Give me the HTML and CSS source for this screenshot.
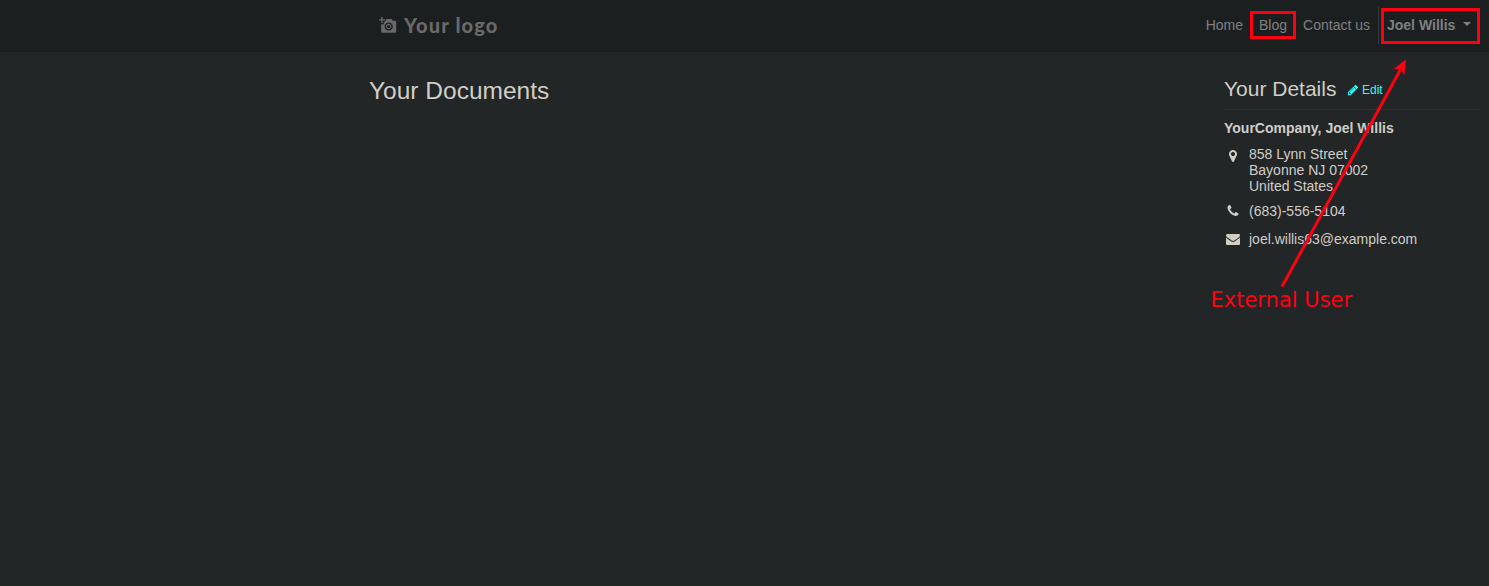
FILE: index.html
```html
<!DOCTYPE html>
<html lang="en">
<head>
<meta charset="utf-8">
<title>Your Documents</title>
<link rel="stylesheet" href="styles.css">
</head>
<body>
<header class="header">
  <a class="logo">
    <svg class="logo-icon" viewBox="0 0 18 17"><path d="M2.2 0h1.4v2.2H6v1.4H3.6V6H2.2V3.6H0V2.2h2.2z"/><path fill-rule="evenodd" d="M7.2 2h5.2l1.4 1.8H16q1.2 0 1.2 1.2v9.6q0 1.2-1.2 1.2H3.4q-1.2 0-1.2-1.2V7.2h2.6V4.8h1.2zM9.7 5.4a4.1 4.1 0 1 0 .01 0zM9.7 6.8a2.7 2.7 0 1 1-.01 0zM9.7 7.9a1.6 1.6 0 1 0 .01 0z"/></svg>
    <span class="logo-text">Your logo</span>
  </a>
  <nav class="nav">
    <a class="link home">Home</a>
    <a class="link blog">Blog</a>
    <a class="link contact">Contact us</a>
    <span class="divider"></span>
    <a class="link user">Joel Willis<span class="caret"></span></a>
  </nav>
</header>
<main class="content">
  <h1 class="title">Your Documents</h1>
  <aside class="details">
    <div class="details-head">
      <h2 class="subtitle">Your Details</h2>
      <a class="edit"><svg class="pencil" viewBox="0 0 1792 1792"><path d="M491 1536l91-91-235-235-91 91v107h128v128h107zm523-928q0-22-22-22-10 0-17 7l-542 542q-7 7-7 17 0 22 22 22 10 0 17-7l542-542q7-7 7-17zm-54-192l416 416-832 832h-416v-416zm683 96q0 53-37 90l-166 166-416-416 166-165q36-38 90-38 53 0 91 38l235 234q37 39 37 91z"/></svg>Edit</a>
    </div>
    <div class="name">YourCompany, Joel Willis</div>
    <div class="row address">
      <svg class="icon" viewBox="0 0 1792 1792"><path d="M1152 640q0-106-75-181t-181-75-181 75-75 181 75 181 181 75 181-75 75-181zm256 0q0 109-33 179l-364 774q-16 33-47.5 52t-67.5 19-67.5-19-46.5-52l-365-774q-33-70-33-179 0-212 150-362t362-150 362 150 150 362z"/></svg>
      <div>858 Lynn Street<br>Bayonne NJ 07002<br>United States</div>
    </div>
    <div class="row phone">
      <svg class="icon" viewBox="0 0 1792 1792"><path d="M1600 1240q0 27-10 70.5t-21 68.5q-21 50-122 106-94 51-186 51-27 0-53-3.5t-57.5-12.5-47-14.5-55.5-20.5-49-18q-98-35-175-83-127-79-264-216t-216-264q-48-77-83-175-3-9-18-49t-20.5-55.5-14.5-47-12.5-57.5-3.5-53q0-92 51-186 56-101 106-122 25-11 68.5-21t70.5-10q14 0 21 3 18 6 53 76 11 19 30 54t35 63.5 31 53.5q3 4 17.5 25t21.5 35.5 7 28.5q0 20-28.5 50t-62 55-62 53-28.5 46q0 9 5 22.5t8.5 20.5 14 24 11.5 19q76 137 174 235t235 174q2 1 19 11.5t24 14 20.5 8.5 22.5 5q18 0 46-28.5t53-62 55-62 50-28.5q14 0 28.5 7t35.5 21.5 25 17.5q25 15 53.5 31t63.5 35 54 30q70 35 76 53 3 7 3 21z"/></svg>
      <div>(683)-556-5104</div>
    </div>
    <div class="row mail">
      <svg class="icon" viewBox="0 0 1792 1792"><path d="M1792 710v794q0 66-47 113t-113 47h-1472q-66 0-113-47t-47-113v-794q44 49 101 87 362 246 497 345 57 42 92.5 65.5t94.5 48 110 24.5h2q51 0 110-24.5t94.5-48 92.5-65.5q170-123 498-345 57-39 100-87zm0-294q0 79-49 151t-122 123q-376 261-468 325-10 7-42.5 31t-54 38.5-52 32.5-57.5 27-50 9h-2q-23 0-50-9t-57.5-27-52-32.5-54-38.5-42.5-31q-91-64-262-182.5t-205-142.5q-62-42-117-115.5t-55-136.5q0-78 41.5-130t118.5-52h1472q65 0 112.5 47t47.5 113z"/></svg>
      <div>joel.willis63@example.com</div>
    </div>
  </aside>
</main>
<!-- Annotations drawn over the page -->
<svg class="marks" viewBox="0 0 1489 586">
  <g class="boxes"><rect x="1251.5" y="12.5" width="43" height="25"/><rect x="1382.5" y="9.5" width="96" height="33"/><path d="M1282.1 286.5L1400.5 69.5"/></g>
  <path class="arrowhead" d="M1405.9 59.5L1404.3 75.3L1400.8 68.8L1393.3 69.2z"/>
</svg>
<div class="note">External User</div>
</body>
</html>
```

FILE: styles.css
```css
* { box-sizing: border-box; }
body {
  margin: 0;
  height: 586px;
  overflow: hidden;
  background: #222627;
  color: #d1cdc7;
  font: 14px/16px "Liberation Sans", Arial, sans-serif;
}
.header {
  display: flex;
  justify-content: space-between;
  height: 52px;
  padding: 0 9px 0 379px;
  background: #1b1f20;
  color: #808080;
}
.logo { display: flex; align-items: flex-start; color: #696969; }
.logo-icon { width: 18px; height: 17px; margin-top: 17px; fill: currentColor; }
.logo-text { margin: 13px 0 0 7px; font: 900 20px/24px Lato, sans-serif; letter-spacing: 1.15px; white-space: nowrap; }
.nav { display: flex; align-items: flex-start; padding-top: 7px; }
.link { padding-top: 10px; white-space: nowrap; }
.home { margin-right: 16px; }
.blog { margin-right: 16px; }
.contact { margin-right: 8px; }
.divider { width: 1px; height: 37px; margin-right: 8px; background: #363b3d; }
.user { display: flex; width: 93px; font-weight: bold; }
.caret {
  width: 8px;
  height: 4px;
  margin: 5px 0 0 8px;
  border: 4px solid transparent;
  border-top-color: currentColor;
  border-bottom: 0;
}
.content { display: flex; justify-content: space-between; padding: 0 9px 0 369px; }
h1, h2 { margin: 0; font-weight: normal; white-space: nowrap; }
.title { margin-top: 24px; font-size: 24.5px; line-height: 29px; }
.details { width: 256px; }
.details-head { display: flex; height: 58px; padding-top: 24px; border-bottom: 1px solid #2d3132; }
.subtitle { font-size: 21px; line-height: 26px; }
.edit { display: flex; align-items: flex-start; margin: 6px 0 0 11px; color: #33f9f9; font-size: 12px; line-height: 16px; }
.pencil { width: 12px; height: 12px; margin: 2px 2.5px 0 0; fill: currentColor; }
.name { margin-top: 10px; font-weight: bold; }
.row { display: flex; gap: 9px; padding-left: 2px; }
.icon { flex: none; width: 14px; height: 14px; fill: currentColor; }
.address { margin-top: 10px; }
.address .icon { margin-top: 3px; }
.phone { margin-top: 9px; }
.phone .icon { margin-top: 1px; }
.mail { margin-top: 12px; }
.mail .icon { margin-top: 1px; }
.marks { position: absolute; inset: 0; width: 1489px; height: 586px; }
.boxes { fill: none; stroke: #ff0013; stroke-width: 3; }
.arrowhead { fill: #ff0013; }
.note {
  position: absolute;
  left: 1210.5px;
  top: 288px;
  color: #ff0013;
  font: 21px/25px "DejaVu Sans", sans-serif;
  white-space: nowrap;
}
```
